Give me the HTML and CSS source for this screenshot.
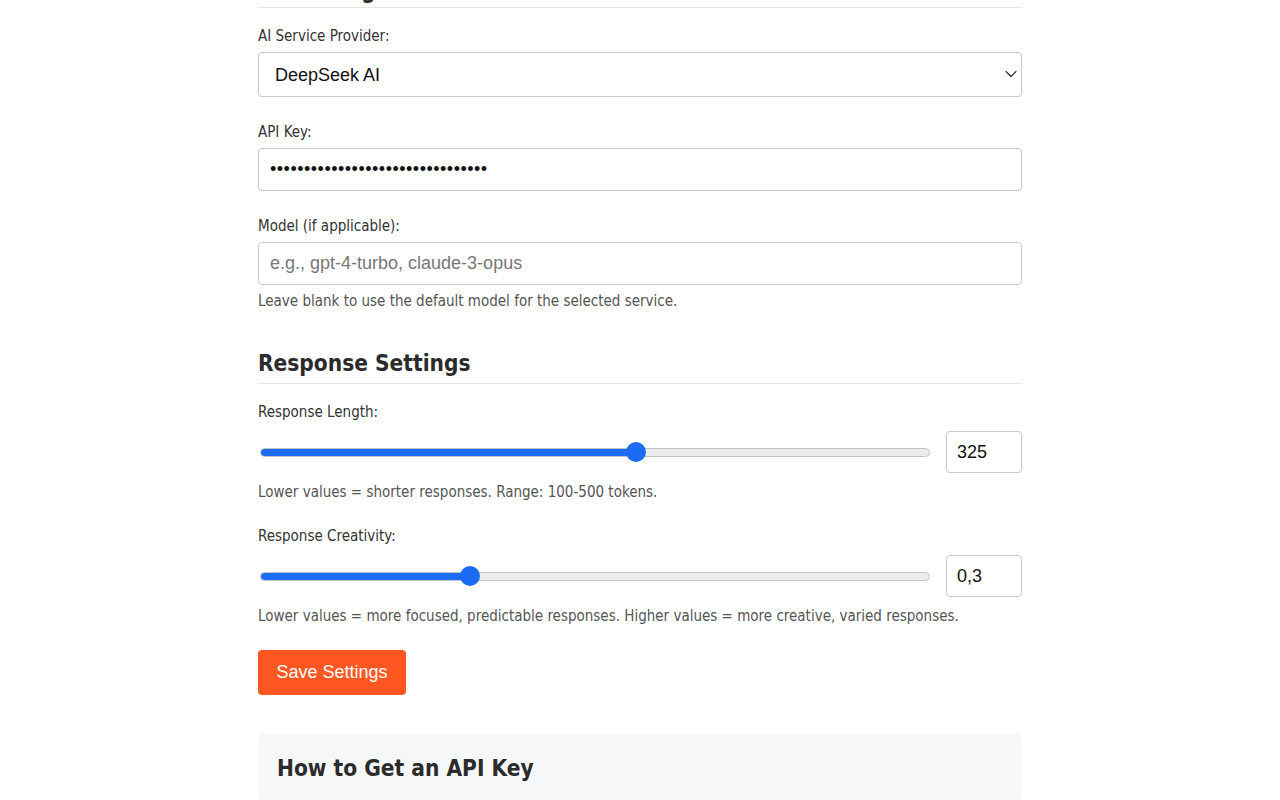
FILE: index.html
```html
<!DOCTYPE html>
<html>
<head>
<meta charset="utf-8">
<link rel="stylesheet" href="styles.css">
</head>
<body>
<div class="container">
  <section class="section">
    <h2 class="section-title section-title--first">API Configuration</h2>
    <div class="field">
      <label class="label">AI Service Provider:</label>
      <div class="select-wrap">
        <select class="control select">
          <option>DeepSeek AI</option>
        </select>
        <svg class="chev" width="12" height="8" viewBox="0 0 12 8"><path d="M1 1.5 L6 6.5 L11 1.5" fill="none" stroke="#333" stroke-width="1.2" stroke-linecap="round" stroke-linejoin="round"/></svg>
      </div>
    </div>
    <div class="field">
      <label class="label">API Key:</label>
      <input class="control input password" type="password" value="abcdefghijklmnopqrstuvwxyz123456">
    </div>
    <div class="field">
      <label class="label">Model (if applicable):</label>
      <input class="control input" type="text" placeholder="e.g., gpt-4-turbo, claude-3-opus">
      <p class="help">Leave blank to use the default model for the selected service.</p>
    </div>
  </section>
  <section class="section">
    <h2 class="section-title">Response Settings</h2>
    <div class="field">
      <label class="label">Response Length:</label>
      <div class="range-row">
        <input class="range" type="range" min="100" max="500" value="325" style="--p:0.5625">
        <input class="control num" type="text" value="325">
      </div>
      <p class="help">Lower values = shorter responses. Range: 100-500 tokens.</p>
    </div>
    <div class="field">
      <label class="label">Response Creativity:</label>
      <div class="range-row">
        <input class="range" type="range" min="0" max="1" step="any" value="0.307" style="--p:0.307">
        <input class="control num" type="text" value="0,3">
      </div>
      <p class="help">Lower values = more focused, predictable responses. Higher values = more creative, varied responses.</p>
    </div>
    <button class="save">Save Settings</button>
  </section>
  <section class="info">
    <h3 class="info-title">How to Get an API Key</h3>
  </section>
</div>
</body>
</html>
```
FILE: styles.css
```css
html, body {
  margin: 0;
  padding: 0;
  background: #fff;
}
body {
  font-family: "DejaVu Sans Condensed", "DejaVu Sans", Tahoma, sans-serif;
  color: #333;
  overflow: hidden;
}
.container {
  width: 764px;
  margin: -24px auto 0;
}
.section {
  margin-bottom: 39px;
}
.section-title {
  font-size: 22.5px;
  line-height: 28px;
  font-weight: bold;
  margin: 0 0 19px;
  padding-bottom: 6px;
  border-bottom: 1px solid #e6e6e6;
  color: #2b2b2b;
}
.section-title--first {
  padding-bottom: 3px;
}
.field {
  margin-bottom: 26px;
}
.section .field:last-of-type {
  margin-bottom: 25px;
}
.section:first-child .field:last-of-type {
  margin-bottom: 0;
}
.label {
  display: block;
  font-size: 15px;
  line-height: 18px;
  margin-bottom: 7px;
  color: #333;
}
.control {
  box-sizing: border-box;
  border: 1px solid #c8c8c8;
  border-radius: 4px;
  font-family: "Liberation Sans", Arial, sans-serif;
  font-size: 18px;
  color: #111;
  background: #fff;
  outline: none;
}
.select-wrap {
  position: relative;
}
.select {
  display: block;
  width: 100%;
  height: 45px;
  padding: 0 16px;
  appearance: none;
  -webkit-appearance: none;
}
.chev {
  position: absolute;
  right: 5px;
  top: 18px;
}
.input {
  display: block;
  width: 100%;
  height: 43px;
  padding: 0 11px;
}
.password {
  letter-spacing: 0.5px;
}
.input::placeholder {
  color: #777;
}
.help {
  margin: 7px 0 0;
  font-size: 15px;
  line-height: 18px;
  color: #555;
}
.range-row {
  display: flex;
  align-items: center;
  gap: 16px;
  height: 48px;
}
.range {
  flex: 1;
  margin: 0 0 0 2px;
  height: 22px;
  -webkit-appearance: none;
  appearance: none;
  background: transparent;
}
.range::-webkit-slider-runnable-track {
  height: 9px;
  border-radius: 5px;
  box-sizing: border-box;
  border: 1px solid #c4c4c4;
  background: linear-gradient(to right, #1a6cf5 0, #1a6cf5 calc(10px + var(--p) * (100% - 20px)), #ececec calc(10px + var(--p) * (100% - 20px)), #ececec 100%);
}
.range::-webkit-slider-thumb {
  -webkit-appearance: none;
  width: 20px;
  height: 20px;
  border-radius: 50%;
  background: #1a6cf5;
  margin-top: -6.5px;
  border: none;
}
.num {
  width: 76px;
  height: 42px;
  padding: 0 10px;
}
.save {
  display: block;
  background: #ff5722;
  color: #fff;
  border: none;
  border-radius: 4px;
  font-family: "Liberation Sans", Arial, sans-serif;
  font-size: 18px;
  width: 148px;
  height: 45px;
  padding: 0;
}
.info {
  background: #f6f7f9;
  border-radius: 6px;
  padding: 20px 19px 20px;
}
.info-title {
  margin: 0;
  font-size: 22.5px;
  line-height: 28px;
  font-weight: bold;
  color: #2b2b2b;
}
```
